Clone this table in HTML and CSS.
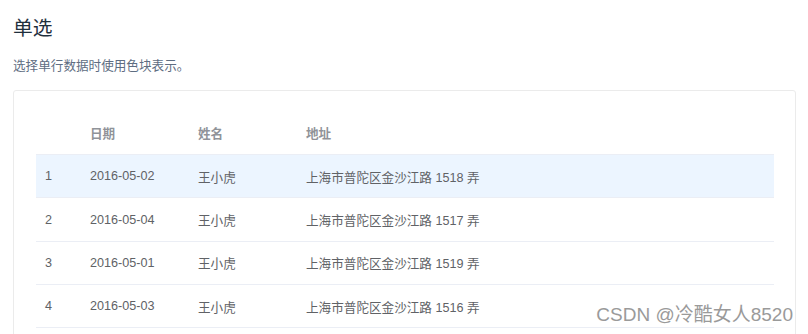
FILE: index.html
```html
<!DOCTYPE html>
<html lang="zh">
<head>
<meta charset="utf-8">
<link rel="stylesheet" href="styles.css">
</head>
<body>
<div class="page">
  <h3 class="title">单选</h3>
  <p class="desc">选择单行数据时使用色块表示。</p>
  <div class="card">
    <table class="table">
      <colgroup>
        <col class="c-idx"><col class="c-date"><col class="c-name"><col>
      </colgroup>
      <thead>
        <tr><th></th><th>日期</th><th>姓名</th><th>地址</th></tr>
      </thead>
      <tbody>
        <tr class="current"><td>1</td><td>2016-05-02</td><td>王小虎</td><td>上海市普陀区金沙江路 1518 弄</td></tr>
        <tr><td>2</td><td>2016-05-04</td><td>王小虎</td><td>上海市普陀区金沙江路 1517 弄</td></tr>
        <tr><td>3</td><td>2016-05-01</td><td>王小虎</td><td>上海市普陀区金沙江路 1519 弄</td></tr>
        <tr><td>4</td><td>2016-05-03</td><td>王小虎</td><td>上海市普陀区金沙江路 1516 弄</td></tr>
      </tbody>
    </table>
  </div>
  <div class="watermark">CSDN @冷酷女人8520</div>
</div>
</body>
</html>
```
FILE: styles.css
```css
html, body {
  margin: 0;
  padding: 0;
  background: #fff;
  overflow: hidden;
}
.page {
  position: relative;
  height: 334px;
  overflow: hidden;
  padding-left: 13px;
  font-family: "Liberation Sans", "Noto Sans CJK SC", sans-serif;
}
.title {
  margin: 0;
  padding-top: 16px;
  font-size: 19.8px;
  line-height: 24px;
  font-weight: normal;
  color: #1f2f3d;
}
.desc {
  margin: 0;
  padding-top: 18px;
  font-size: 12.6px;
  line-height: 16px;
  color: #5e6d82;
}
.card {
  margin-top: 16px;
  width: 783px;
  height: 280px;
  border: 1px solid #ebebeb;
  border-radius: 3px;
  padding: 20.33px 21px 0 22px;
  box-sizing: border-box;
}
.table {
  width: 738px;
  border-collapse: collapse;
  table-layout: fixed;
  font-size: 12.6px;
  color: #606266;
}
.c-idx { width: 45px; }
.c-date { width: 108px; }
.c-name { width: 108px; }
.table th,
.table td {
  height: 43.33px;
  box-sizing: border-box;
  padding: 0 9px;
  text-align: left;
  border-bottom: 1px solid #ebeef5;
  white-space: nowrap;
}
.table th {
  color: #909399;
  font-weight: bold;
}
.table tr.current td {
  background: #ecf5ff;
}
.watermark {
  position: absolute;
  right: 15px;
  top: 304px;
  font-size: 19px;
  line-height: 22px;
  color: #9a9a9a;
  text-shadow: 0 0 2px #fff, 0 0 2px #fff;
}
```
